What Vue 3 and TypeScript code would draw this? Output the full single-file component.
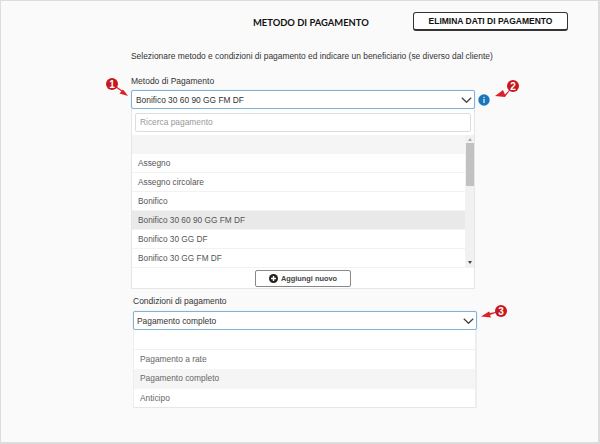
<script setup lang="ts">
const methods = [
  { name: 'Assegno', active: false },
  { name: 'Assegno circolare', active: false },
  { name: 'Bonifico', active: false },
  { name: 'Bonifico 30 60 90 GG FM DF', active: true },
  { name: 'Bonifico 30 GG DF', active: false },
  { name: 'Bonifico 30 GG FM DF', active: false },
]
const terms = [
  { name: 'Pagamento a rate', active: false },
  { name: 'Pagamento completo', active: true },
  { name: 'Anticipo', active: false },
]
const markers = [
  { n: '1', cx: 112, cy: 84, wedge: 'M128 96l-8.500-2.500 3.500-4z' },
  { n: '2', cx: 513, cy: 86, wedge: 'M495 96l8-6 2 4.500 8-8.500-8 11z' },
  { n: '3', cx: 501, cy: 311, wedge: 'M481 316.500l8-5 1 1.500 11-2-11 4 1 2.500z' },
]
</script>

<template>
  <main class="page">
    <header class="top">
      <h1 class="title">METODO DI PAGAMENTO</h1>
      <button class="clear">ELIMINA DATI DI PAGAMENTO</button>
    </header>
    <p class="intro">Selezionare metodo e condizioni di pagamento ed indicare un beneficiario (se diverso dal cliente)</p>

    <section class="field first">
      <label class="label">Metodo di Pagamento</label>
      <div class="select-row">
        <div class="select">
          <span>Bonifico 30 60 90 GG FM DF</span>
          <svg class="chev" width="11" height="6" viewBox="0 0 11 6"><path d="M.8.8l4.700 4.500L10.200.8" fill="none" stroke="#444" stroke-width="1.300" /></svg>
        </div>
        <svg class="info" width="12" height="12" viewBox="0 0 12 12">
          <circle cx="6" cy="6" r="5.700" fill="#1b75bb" />
          <rect x="5.300" y="5" width="1.400" height="4" fill="#cfe4f5" />
          <rect x="5.300" y="2.800" width="1.400" height="1.300" fill="#cfe4f5" />
        </svg>
      </div>
      <div class="panel">
        <div class="search-wrap"><div class="search">Ricerca pagamento</div></div>
        <div class="list-wrap">
          <div class="list">
            <div class="blank"></div>
            <div v-for="m in methods" :key="m.name" class="row" :class="{ active: m.active }">{{ m.name }}</div>
          </div>
          <div class="scrollbar">
            <span class="arrow up"></span>
            <span class="thumb"></span>
            <span class="arrow down"></span>
          </div>
        </div>
        <div class="panel-foot">
          <button class="add">
            <svg width="9" height="9" viewBox="0 0 9 9">
              <circle cx="4.500" cy="4.500" r="4.500" fill="#222" />
              <path d="M4.500 2v5M2 4.500h5" stroke="#fff" stroke-width="1.400" />
            </svg>
            Aggiungi nuovo
          </button>
        </div>
      </div>
    </section>

    <section class="field second">
      <label class="label">Condizioni di pagamento</label>
      <div class="select">
        <span>Pagamento completo</span>
        <svg class="chev" width="11" height="6" viewBox="0 0 11 6"><path d="M.8.8l4.700 4.500L10.200.8" fill="none" stroke="#444" stroke-width="1.300" /></svg>
      </div>
      <div class="panel terms">
        <div class="term-blank"></div>
        <div v-for="t in terms" :key="t.name" class="term" :class="{ active: t.active }">{{ t.name }}</div>
      </div>
    </section>

    <svg class="callouts" width="600" height="444" viewBox="0 0 600 444">
      <g v-for="m in markers" :key="m.n">
        <path :d="m.wedge" fill="#d8232a" />
        <line v-if="m.n === '1'" x1="112" y1="84" x2="126" y2="94" stroke="#d8232a" stroke-width="1.300" />
        <circle :cx="m.cx" :cy="m.cy" r="6" fill="#c9171e" />
        <text :x="m.cx" :y="m.cy + 3.500" text-anchor="middle" class="num">{{ m.n }}</text>
      </g>
    </svg>
  </main>
</template>

<style>
html, body { margin: 0; background: #fafafa; }
</style>

<style scoped>
.page {
  position: relative;
  box-sizing: border-box;
  width: 600px;
  height: 444px;
  overflow: hidden;
  background: #fafafa;
  border-top: 1px solid #ddd;
  border-left: 1px solid #ddd;
  border-right: 2px solid #ddd;
  border-bottom: 2px solid #ddd;
  font-family: "Liberation Sans", Arial, sans-serif;
  color: #333;
}
.top {
  display: flex;
  align-items: center;
  height: 19px;
  margin-top: 11px;
  padding-left: 252px;
}
.title {
  margin: 0;
  width: 160px;
  height: 19px;
  font: 700 9.400px/21px Lato, sans-serif;
  color: #111;
  white-space: nowrap;
}
.clear {
  box-sizing: border-box;
  width: 155px;
  height: 19px;
  padding: 0;
  background: #fff;
  border: 1px solid #333;
  border-bottom-width: 2px;
  border-radius: 3px;
  font: 700 8.500px/1 "Liberation Sans", sans-serif;
  color: #111;
}
.intro {
  margin: 19px 0 0 130px;
  font-size: 8.420px;
  line-height: 12px;
  color: #333;
  white-space: nowrap;
}
.field { width: 344px; }
.first { margin: 13px 0 0 130px; }
.second { margin: 6px 0 0 132px; }
.label {
  display: block;
  font-size: 8.500px;
  line-height: 13px;
  color: #333;
}
.first .label { margin-bottom: 2px; }
.second .label { margin-bottom: 3px; }
.select-row { display: flex; align-items: center; width: 344px; position: relative; }
.select {
  box-sizing: border-box;
  flex: none;
  width: 344px;
  height: 19px;
  padding: 0 2px 0 4px;
  display: flex;
  align-items: center;
  justify-content: space-between;
  background: #fff;
  border: 1px solid #7fb3dc;
  border-radius: 2px;
  box-shadow: 0 0 1px #a9cde9;
  font-size: 8.400px;
  color: #333;
}
.second .select { padding-left: 3px; }
.second .select span { padding-top: 1px; }
.info { flex: none; margin-left: 3px; }
.panel {
  box-sizing: border-box;
  width: 344px;
  background: #fff;
  border: 1px solid #e6e6e6;
  border-top: 0;
}
.search-wrap { padding: 4px 3px 3px; }
.search {
  box-sizing: border-box;
  height: 19px;
  padding: 0 4px;
  border: 1px solid #ddd;
  border-radius: 2px;
  font-size: 8.400px;
  line-height: 17px;
  color: #999;
  background: #fff;
}
.list-wrap { display: flex; height: 133px; overflow: hidden; }
.list { flex: 1; min-width: 0; }
.blank { height: 19px; background: #f5f5f5; }
.row {
  box-sizing: border-box;
  height: 19px;
  padding-left: 6px;
  border-bottom: 1px solid #f2f2f2;
  font-size: 8.300px;
  line-height: 18px;
  color: #555;
}
.row.active { background: #e9e9e9; }
.scrollbar {
  flex: none;
  width: 9px;
  display: flex;
  flex-direction: column;
  align-items: center;
  background: #f1f1f1;
}
.thumb { width: 8px; height: 43px; margin-top: 2px; background: #c1c1c1; }
.arrow { width: 0; height: 0; border-left: 2.500px solid transparent; border-right: 2.500px solid transparent; }
.arrow.up { margin-top: 3px; border-bottom: 3px solid #aaa; }
.arrow.down { margin-top: auto; margin-bottom: 4px; border-top: 3px solid #444; }
.panel-foot {
  height: 20px;
  display: flex;
  justify-content: center;
  padding: 2px 0 0 0;
  box-sizing: border-box;
}
.add {
  box-sizing: border-box;
  width: 96px;
  height: 17px;
  padding: 0;
  display: flex;
  align-items: center;
  justify-content: center;
  gap: 3px;
  background: #fff;
  border: 1px solid #888;
  border-radius: 2px;
  font: 700 7.400px/1 "Liberation Sans", sans-serif;
  color: #444;
}
.terms { border-left-color: #eee; border-right-color: #eee; border-right-width: 2px; }
.term-blank { box-sizing: border-box; height: 20px; border-bottom: 1px solid #f0f0f0; }
.term {
  height: 19px;
  padding-left: 6px;
  font-size: 8.400px;
  line-height: 19px;
  color: #666;
}
.term.active { background: #f5f5f5; height: 20px; line-height: 19px; }
.term:last-child { height: 18px; line-height: 18px; }
.callouts { position: absolute; left: -1px; top: -1px; pointer-events: none; }
.num { font: 700 10px "Liberation Sans", sans-serif; fill: #fff; }
</style>
